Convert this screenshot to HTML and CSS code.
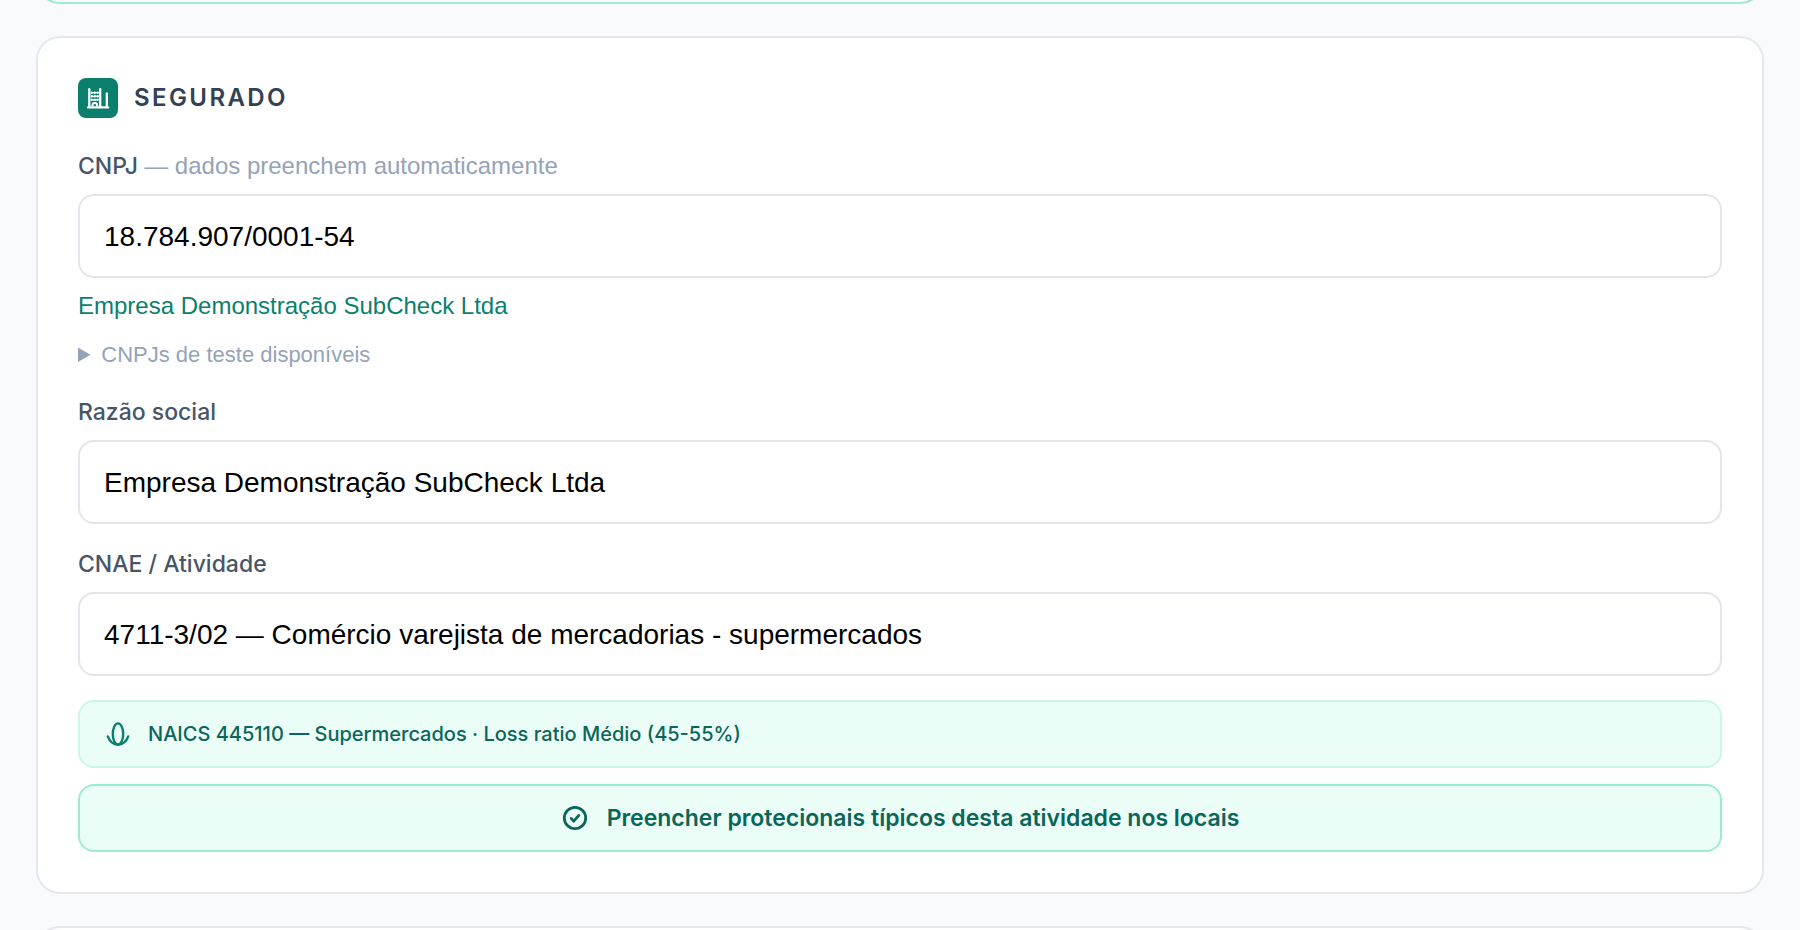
FILE: index.html
```
<!doctype html>
<html lang="pt-BR">

<head>
    <meta charset="utf-8">
    <meta name="viewport" content="width=device-width, initial-scale=1">
    <title>Segurado</title>
    <link rel="stylesheet" href="styles.css">
</head>

<body>
<main class="page">
    <section class="card card-accent"></section>

    <section class="card">
        <header class="card-header">
            <span class="card-icon">
                <svg viewBox="0 0 24 22" width="24" height="22" fill="none" stroke="currentColor" aria-hidden="true">
                    <path d="M2.2 20.4h19.8" stroke-width="2.4" stroke-linecap="round"/>
                    <path d="M3.3 2.2v18M14.2 2.2v18M20.8 6.4v13.8" stroke-width="2.3" stroke-linecap="round"/>
                    <path d="M5.8 5.7v0M8.8 5.7v0M11.7 5.7v0M5.8 9.3v0M8.8 9.3v0M11.7 9.3v0M5.8 12.8v0M8.8 12.8v0M11.7 12.8v0" stroke-width="2.4" stroke-linecap="round"/>
                    <path d="M5.8 5.7h6M5.8 9.3h6M5.8 12.8h6" stroke-width="1.2"/>
                    <path d="M6.5 19.5v-1.4q0-2 2.3-2t2.3 2v1.4" stroke-width="2"/>
                </svg>
            </span>
            <h2 class="card-title">Segurado</h2>
        </header>

        <form class="form">
            <div class="field">
                <label for="cnpj">CNPJ <span class="label-note">— dados preenchem automaticamente</span></label>
                <input id="cnpj" name="cnpj" type="text" value="18.784.907/0001-54">
                <p class="company">Empresa Demonstração SubCheck Ltda</p>
                <details class="samples">
                    <summary>CNPJs de teste disponíveis</summary>
                </details>
            </div>

            <div class="field">
                <label for="razao">Razão social</label>
                <input id="razao" name="razao" type="text" value="Empresa Demonstração SubCheck Ltda">
            </div>

            <div class="field">
                <label for="cnae">CNAE / Atividade</label>
                <input id="cnae" name="cnae" type="text" value="4711-3/02 — Comércio varejista de mercadorias - supermercados">
            </div>

            <div class="actions">
                <div class="naics">
                    <svg class="icon" viewBox="0 0 28 28" fill="none" stroke="currentColor" stroke-width="2.4" stroke-linecap="round" aria-hidden="true">
                        <ellipse cx="14" cy="14" rx="5.2" ry="10.6"/>
                        <path d="M3.8 16.4C5.6 21.4 9.2 24.6 14 24.6s8.4-3.2 10.2-8.2"/>
                    </svg>
                    <span>NAICS 445110 — Supermercados · Loss ratio Médio (45-55%)</span>
                </div>

                <button type="button" class="fill-button">
                    <svg class="icon" viewBox="0 0 28 28" fill="none" stroke="currentColor" stroke-width="2.8" stroke-linecap="round" stroke-linejoin="round" aria-hidden="true">
                        <circle cx="14" cy="14" r="10.7"/>
                        <path d="M10.2 14.4l2.6 2.8 5-5.8"/>
                    </svg>
                    Preencher protecionais típicos desta atividade nos locais
                </button>
            </div>
        </form>
    </section>

    <section class="card"></section>
</main>
</body>
</html>
```

FILE: styles.css
```
:root {
    /* Colors */
    --color-bg: #f9fafc;
    --color-card: #fff;
    --color-border: #e5e7eb;
    --color-input-border: #e4e4eb;
    --color-title: #334155;
    --color-label: #475569;
    --color-muted: #94a3b8;
    --color-brand: #0b7f6e;
    --color-brand-dark: #0b665a;
    --color-mint: #ebfdf7;
    --color-mint-border: #ccf7e8;
    --color-mint-strong: #9cebd6;

    /* Typography */
    --font-text: 'Liberation Sans', Arial, sans-serif;
    --font-strong: Inter, 'Liberation Sans', sans-serif;
}

*, *::before, *::after {
    box-sizing: border-box;
}

body {
    height: 100vh;
    margin: 0;
    overflow: hidden;
    font-family: var(--font-text);
    font-size: 24px;
    line-height: 32px;
    background: var(--color-bg);
}

/* The page is scrolled past the first card */
.page {
    display: flex;
    flex-direction: column;
    gap: 32px;
    margin-top: -80px;
    padding: 0 36px;
}

.card {
    min-height: 84px;
    padding: 40px;
    background: var(--color-card);
    border: 2px solid var(--color-border);
    border-radius: 24px;
}

.card-accent {
    border-color: var(--color-mint-strong);
}

.card-header {
    display: flex;
    align-items: center;
    gap: 16px;
    margin-bottom: 32px;
}

.card-icon {
    display: flex;
    align-items: center;
    justify-content: center;
    width: 40px;
    height: 40px;
    color: #fff;
    background: var(--color-brand);
    border-radius: 8px;
}

.card-title {
    margin: 0;
    font-family: var(--font-strong);
    font-size: 24px;
    font-weight: 600;
    letter-spacing: 0.1em;
    text-transform: uppercase;
    color: var(--color-title);
}

.form {
    display: flex;
    flex-direction: column;
    gap: 24px;
}

.field {
    display: flex;
    flex-direction: column;
}

label {
    margin-bottom: 12px;
    font-family: var(--font-strong);
    font-size: 23px;
    font-weight: 500;
    color: var(--color-label);
}

.label-note {
    font-family: var(--font-text);
    font-size: 24px;
    font-weight: 400;
    color: var(--color-muted);
}

input {
    width: 100%;
    height: 84px;
    padding: 2px 24px 0;
    font-family: var(--font-text);
    font-size: 28px;
    color: #000;
    background: var(--color-card);
    border: 2px solid var(--color-input-border);
    border-radius: 16px;
}

input:focus {
    outline: none;
    border-color: var(--color-brand);
}

.company {
    margin: 12px 0 16px;
    color: var(--color-brand);
}

.samples {
    font-size: 22px;
    line-height: 34px;
    color: var(--color-muted);
}

.samples summary {
    cursor: pointer;
}

.actions {
    display: flex;
    flex-direction: column;
    gap: 16px;
}

.naics,
.fill-button {
    display: flex;
    align-items: center;
    gap: 16px;
    height: 68px;
    padding: 0 24px;
    font-family: var(--font-strong);
    color: var(--color-brand-dark);
    background: var(--color-mint);
    border: 2px solid var(--color-mint-border);
    border-radius: 16px;
}

.naics {
    font-size: 20px;
    font-weight: 500;
}

.naics .icon {
    color: var(--color-brand);
}

.fill-button {
    justify-content: center;
    gap: 18px;
    font-size: 23px;
    font-weight: 600;
    border-color: var(--color-mint-strong);
    cursor: pointer;
}

.icon {
    flex: none;
    width: 28px;
    height: 28px;
}
```
